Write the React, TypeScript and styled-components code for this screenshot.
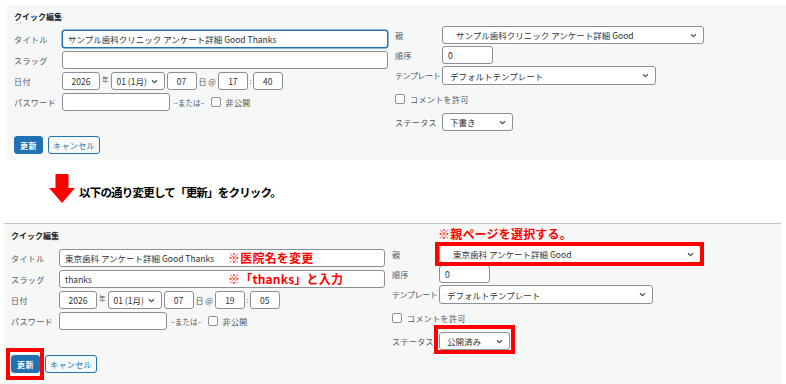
import styled, { createGlobalStyle, css } from "styled-components";

const GlobalStyle = createGlobalStyle`
  html, body {
    margin: 0;
    padding: 0;
    background: #fff;
  }
  body {
    width: 786px;
    height: 384px;
    overflow: hidden;
    font-family: "Noto Sans CJK JP", "Noto Sans", sans-serif;
    color: #2c3338;
  }
`;

const RED = "#ff0000";

const Page = styled.div`
  display: flex;
  flex-direction: column;
  height: 384px;
`;

const Panel = styled.section<{ $left: number; $top: number; $line?: boolean }>`
  margin: ${(p) => p.$top}px 0 0 ${(p) => p.$left}px;
  padding: 7px 0 6px 7px;
  background: #f6f7f7;
  box-sizing: border-box;
  ${(p) =>
    p.$line &&
    css`
      width: 777px;
      flex: 1;
      border-top: 1px solid #c3c4c7;
    `}
`;

const Columns = styled.div`
  display: grid;
  grid-template-columns: 381px 1fr;
`;

const Column = styled.div<{ $pad?: number; $gap: number }>`
  display: flex;
  flex-direction: column;
  gap: ${(p) => p.$gap}px;
  padding-top: ${(p) => p.$pad ?? 0}px;
`;

const Heading = styled.div`
  height: 10px;
  line-height: 10px;
  margin-bottom: 5px;
  font-size: 8px;
  font-weight: 700;
  color: #1d2327;
`;

const Row = styled.div<{ $h?: number }>`
  display: flex;
  align-items: center;
  height: ${(p) => p.$h ?? 18}px;
`;

const Label = styled.span<{ $w: number; $tight?: boolean }>`
  width: ${(p) => p.$w}px;
  flex: none;
  font-size: 8px;
  color: #50575e;
  white-space: nowrap;
  letter-spacing: ${(p) => (p.$tight ? "-0.4px" : "0.4px")};
`;

const marked = css<{ $mark?: string }>`
  ${(p) =>
    p.$mark &&
    css`
      &::after {
        content: "";
        position: absolute;
        inset: ${p.$mark};
        border: 4px solid ${RED};
        pointer-events: none;
        z-index: 1;
      }
    `}
`;

const TextBox = styled.div<{ $w: number; $focus?: boolean; $center?: boolean; $mark?: string }>`
  position: relative;
  flex: none;
  width: ${(p) => p.$w}px;
  height: 18px;
  box-sizing: border-box;
  display: flex;
  align-items: center;
  justify-content: ${(p) => (p.$center ? "center" : "flex-start")};
  padding: 0 5px;
  background: #fff;
  border: 1px solid ${(p) => (p.$focus ? "#2271b1" : "#8c8f94")};
  box-shadow: ${(p) => (p.$focus ? "0 0 0 0.5px #2271b1" : "none")};
  border-radius: 3px;
  font-size: 8.5px;
  color: #2c3338;
  white-space: nowrap;
  ${marked}
`;

const SelectBox = styled(TextBox)<{ $indent?: number }>`
  justify-content: space-between;
  padding: 0 6px 0 ${(p) => p.$indent ?? 5}px;
`;

const Unit = styled.span<{ $size?: number; $top?: boolean; $mx: string }>`
  margin: 0 ${(p) => p.$mx};
  font-size: ${(p) => p.$size ?? 8}px;
  color: #50575e;
  align-self: ${(p) => (p.$top ? "flex-start" : "center")};
  margin-top: ${(p) => (p.$top ? "2px" : "0")};
  white-space: nowrap;
`;

const Check = styled.span<{ $ml?: number }>`
  width: 10px;
  height: 10px;
  flex: none;
  margin-left: ${(p) => p.$ml ?? 0}px;
  box-sizing: border-box;
  border: 1px solid #8c8f94;
  border-radius: 2px;
  background: #fff;
`;

const CheckText = styled.span`
  margin-left: 5px;
  font-size: 8px;
  color: #50575e;
  letter-spacing: 0.4px;
`;

const Buttons = styled.div`
  display: flex;
  gap: 5px;
  margin-top: 5px;
`;

const Button = styled.button<{ $primary?: boolean; $w: number; $mark?: string }>`
  position: relative;
  width: ${(p) => p.$w}px;
  height: 18px;
  padding: 0;
  box-sizing: border-box;
  border: 1px solid #2271b1;
  border-radius: 3px;
  background: ${(p) => (p.$primary ? "#2271b1" : "#f6f7f7")};
  color: ${(p) => (p.$primary ? "#fff" : "#2271b1")};
  font-family: inherit;
  font-size: 8px;
  font-weight: ${(p) => (p.$primary ? 700 : 400)};
  letter-spacing: 0.4px;
  ${marked}
`;

const Note = styled.span<{ $left: number; $above?: boolean }>`
  position: absolute;
  left: ${(p) => p.$left}px;
  ${(p) => (p.$above ? "bottom: calc(100% + 5px);" : "top: 50%; transform: translateY(-50%);")}
  font-size: 12px;
  line-height: 14px;
  font-weight: 700;
  color: ${RED};
  white-space: nowrap;
  letter-spacing: 0.2px;
  z-index: 2;
`;

const Instruction = styled.div`
  height: 63px;
  box-sizing: border-box;
  display: flex;
  align-items: flex-start;
  padding: 14px 0 0 49px;
  gap: 4px;
`;

const InstructionText = styled.span`
  margin-top: 8px;
  line-height: 20px;
  font-size: 11.5px;
  font-weight: 700;
  letter-spacing: -0.8px;
  color: #000;
`;

const Chevron = () => (
  <svg width="7" height="5" viewBox="0 0 7 5">
    <path d="M1 1.2 L3.5 3.7 L6 1.2" fill="none" stroke="#50575e" strokeWidth="1.3" />
  </svg>
);

const DownArrow = () => (
  <svg width="26" height="29" viewBox="0 0 26 29">
    <rect x="6.5" y="0" width="13" height="14.5" fill={RED} />
    <polygon points="0,14 26,14 13,29" fill={RED} />
  </svg>
);

type Data = {
  title: string;
  slug: string;
  hour: string;
  minute: string;
  parent: string;
  status: string;
  focus?: boolean;
  notes?: boolean;
};

function QuickEdit({ d, left, top, line }: { d: Data; left: number; top: number; line?: boolean }) {
  return (
    <Panel $left={left} $top={top} $line={line}>
      <Columns>
        <Column $gap={3}>
          <Heading>クイック編集</Heading>
          <Row>
            <Label $w={48}>タイトル</Label>
            <TextBox $w={326} $focus={d.focus}>
              {d.title}
              {d.notes && <Note $left={168}>※医院名を変更</Note>}
            </TextBox>
          </Row>
          <Row>
            <Label $w={48}>スラッグ</Label>
            <TextBox $w={326}>
              {d.slug}
              {d.notes && <Note $left={168}>※「thanks」と入力</Note>}
            </TextBox>
          </Row>
          <Row>
            <Label $w={48}>日付</Label>
            <TextBox $w={38} $center>2026</TextBox>
            <Unit $size={6.5} $top $mx="2px">年</Unit>
            <SelectBox $w={54}>
              01 (1月)
              <Chevron />
            </SelectBox>
            <TextBox $w={30} $center style={{ marginLeft: 2 }}>07</TextBox>
            <Unit $mx="2px">日 @</Unit>
            <TextBox $w={30} $center>{d.hour}</TextBox>
            <Unit $size={7} $mx="1.5px">:</Unit>
            <TextBox $w={30} $center>{d.minute}</TextBox>
          </Row>
          <Row>
            <Label $w={48}>パスワード</Label>
            <TextBox $w={108} />
            <Unit $size={7.5} $mx="4px">–または–</Unit>
            <Check $ml={2} />
            <CheckText>非公開</CheckText>
          </Row>
        </Column>
        <Column $pad={14} $gap={2}>
          <Row>
            <Label $w={47}>親</Label>
            <SelectBox $w={262} $indent={13} $mark={d.notes ? "-4px -4px -4px -5px" : undefined}>
              {d.parent}
              <Chevron />
              {d.notes && <Note $left={-2} $above>※親ページを選択する。</Note>}
            </SelectBox>
          </Row>
          <Row>
            <Label $w={47}>順序</Label>
            <TextBox $w={51}>0</TextBox>
          </Row>
          <Row $h={19}>
            <Label $w={47} $tight>テンプレート</Label>
            <SelectBox $w={214} $indent={7} style={{ height: 19 }}>
              デフォルトテンプレート
              <Chevron />
            </SelectBox>
          </Row>
          <Row $h={24}>
            <Check />
            <CheckText>コメントを許可</CheckText>
          </Row>
          <Row>
            <Label $w={47}>ステータス</Label>
            <SelectBox $w={71} $indent={7} $mark={d.notes ? "-8px -6px -5px -6px" : undefined}>
              {d.status}
              <Chevron />
            </SelectBox>
          </Row>
        </Column>
      </Columns>
      <Buttons>
        <Button $primary $w={29} $mark={d.notes ? "-8px -5px -8px -6px" : undefined}>
          更新
        </Button>
        <Button $w={52}>キャンセル</Button>
      </Buttons>
    </Panel>
  );
}

const before: Data = {
  title: "サンプル歯科クリニック アンケート詳細 Good Thanks",
  slug: "",
  hour: "17",
  minute: "40",
  parent: "サンプル歯科クリニック アンケート詳細 Good",
  status: "下書き",
  focus: true,
};

const after: Data = {
  title: "東京歯科 アンケート詳細 Good Thanks",
  slug: "thanks",
  hour: "19",
  minute: "05",
  parent: "東京歯科 アンケート詳細 Good",
  status: "公開済み",
  notes: true,
};

export default function App() {
  return (
    <Page>
      <GlobalStyle />
      <QuickEdit d={before} left={7} top={5} />
      <Instruction>
        <DownArrow />
        <InstructionText>以下の通り変更して「更新」をクリック。</InstructionText>
      </Instruction>
      <QuickEdit d={after} left={4} top={0} line />
    </Page>
  );
}
